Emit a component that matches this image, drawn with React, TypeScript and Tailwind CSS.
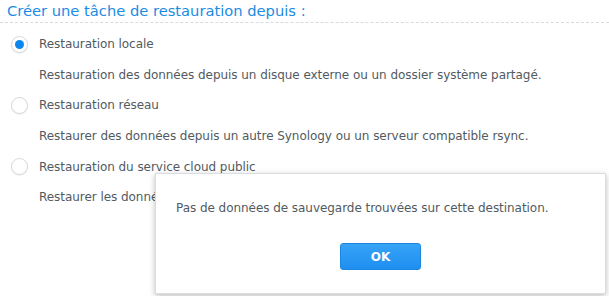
import React, { useState } from 'react';

type Option = {
  id: string;
  label: string;
  description: string;
};

const OPTIONS: Option[] = [
  {
    id: 'local',
    label: 'Restauration locale',
    description: 'Restauration des données depuis un disque externe ou un dossier système partagé.'
  },
  {
    id: 'network',
    label: 'Restauration réseau',
    description: 'Restaurer des données depuis un autre Synology ou un serveur compatible rsync.'
  },
  {
    id: 'cloud',
    label: 'Restauration du service cloud public',
    description: 'Restaurer les données depuis un service de cloud public.'
  }
];

const Radio: React.FC<{ checked: boolean }> = ({ checked }) => (
  <span className="flex h-[17px] w-[17px] shrink-0 items-center justify-center rounded-full border border-[#d3d8dd] bg-white shadow-[0_1px_1px_rgba(0,0,0,0.06)]">
    {checked && <span className="h-[9px] w-[9px] rounded-full bg-[#0b86ee]" />}
  </span>
);

const App: React.FC = () => {
  const [selected, setSelected] = useState('local');
  const [showDialog, setShowDialog] = useState(true);

  return (
    <div className="relative h-[296px] w-[609px] overflow-hidden bg-white font-['DejaVu_Sans',sans-serif] text-[12px] tracking-[-0.05px] text-[#525a61]">
      <div className="flex h-[23px] items-center border-b border-dashed border-[#d6dbe0] pl-[7px]">
        <h1 className="text-[14.7px] leading-none tracking-normal text-[#1b8ce3]">
          Créer une tâche de restauration depuis :
        </h1>
      </div>

      <div className="mt-[6px]">
        {OPTIONS.map((opt) => (
          <div key={opt.id}>
            <label
              className="flex h-[30.6px] cursor-pointer items-center gap-[11px] pl-[11px]"
              onClick={() => setSelected(opt.id)}
            >
              <Radio checked={selected === opt.id} />
              <span>{opt.label}</span>
            </label>
            <p className="flex h-[30.6px] items-center pl-[39px]">{opt.description}</p>
          </div>
        ))}
      </div>

      {showDialog && (
        <div className="absolute left-[155px] top-[173px] flex h-[121px] w-[451px] flex-col items-center border border-[#d9dde1] bg-white shadow-[0_2px_6px_rgba(0,0,0,0.25)]">
          <p className="mt-[25px] w-full pl-[20px] text-left">
            Pas de données de sauvegarde trouvées sur cette destination.
          </p>
          <button
            type="button"
            onClick={() => setShowDialog(false)}
            className="mt-[26px] h-[27px] w-[81px] rounded-[3px] border border-[#1c86df] bg-gradient-to-b from-[#36a3f7] to-[#1e8ff0] text-[12px] font-bold tracking-normal text-white"
          >
            OK
          </button>
        </div>
      )}
    </div>
  );
};

export default App;
